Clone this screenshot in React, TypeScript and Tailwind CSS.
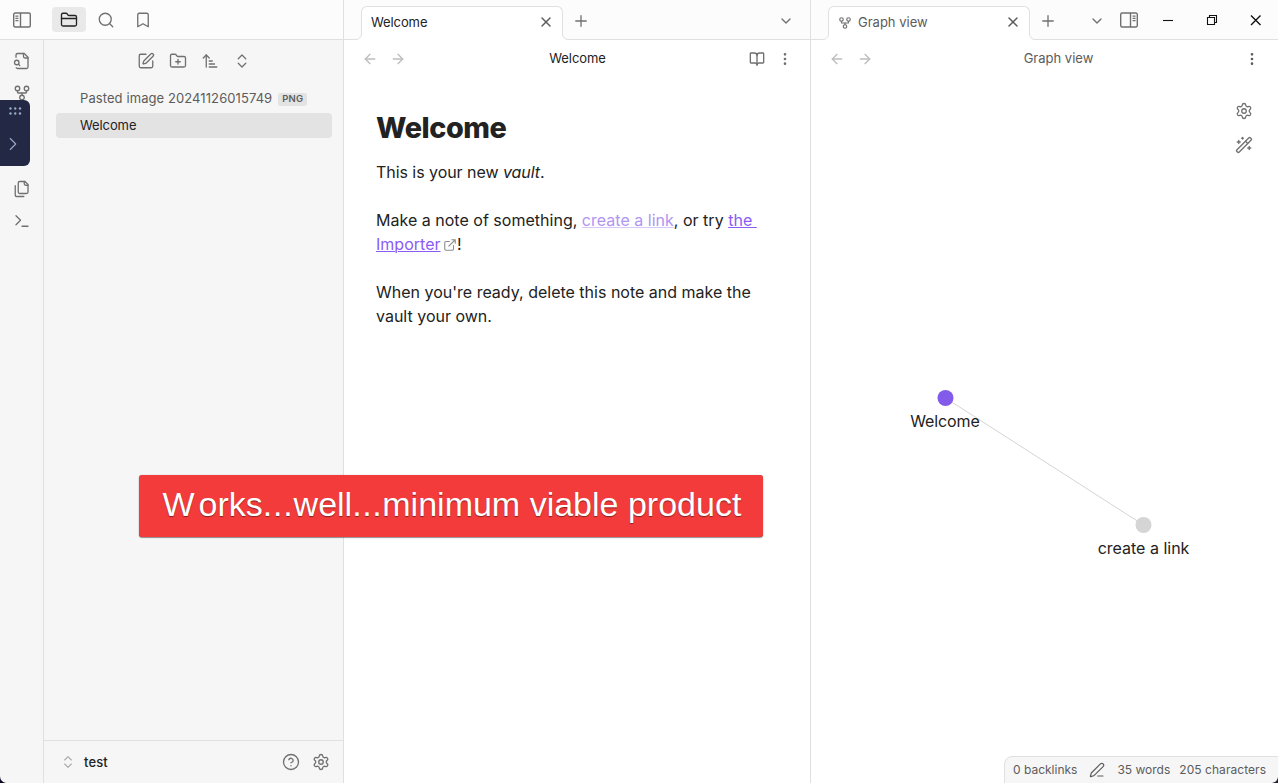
import type { ReactNode } from "react";
import {
  ArrowLeft,
  ArrowRight,
  ArrowUpNarrowWide,
  Bookmark,
  BookOpen,
  ChevronDown,
  ChevronRight,
  ChevronsUpDown,
  CircleHelp,
  EllipsisVertical,
  FolderClosed,
  FolderPlus,
  GitFork,
  PenLine,
  Plus,
  Search,
  Settings,
  SquarePen,
  WandSparkles,
  X,
} from "lucide-react";

function Glyph({ size = 18, stroke = 1.75, className = "", children }: { size?: number; stroke?: number; className?: string; children: ReactNode }) {
  return (
    <svg width={size} height={size} viewBox="0 0 24 24" fill="none" stroke="currentColor" strokeWidth={stroke} strokeLinecap="round" strokeLinejoin="round" className={className}>
      {children}
    </svg>
  );
}

function SidebarIcon({ flip = false }: { flip?: boolean }) {
  return (
    <svg width="18" height="16" viewBox="0 0 18 16" fill="none" stroke="currentColor" strokeWidth="1.4" className={flip ? "-scale-x-100" : ""}>
      <rect x="0.7" y="1" width="16.6" height="14" rx="1.5" />
      <path d="M7.500 1v14" />
      <path d="M2.400 4.100h3M2.400 6.400h3M2.400 8.700h3" strokeWidth="1.200" />
    </svg>
  );
}

function Tab({ title, icon, muted = false }: { title: string; icon?: ReactNode; muted?: boolean }) {
  return (
    <div className="relative mt-[6px] flex h-[34px] w-[202px] shrink-0 items-center rounded-t-[6px] border border-b-0 border-[#e0e0e0] bg-white pr-[9px] pb-[2px] pl-[9px] text-[13px]">
      <svg className="absolute -left-[6px] bottom-0" width="6" height="6" fill="none">
        <path d="M0 6V5.5A5.5 5.5 0 0 0 5.5 0H6V6z" fill="#fff" />
        <path d="M0 5.5A5.5 5.5 0 0 0 5.5 0" stroke="#e0e0e0" />
      </svg>
      <svg className="absolute -right-[6px] bottom-0" width="6" height="6" fill="none">
        <path d="M6 6V5.5A5.5 5.5 0 0 1 .5 0H0V6z" fill="#fff" />
        <path d="M6 5.5A5.5 5.5 0 0 1 .5 0" stroke="#e0e0e0" />
      </svg>
      {icon}
      <span className={muted ? "flex-1 text-[#5c5c5c]" : "flex-1 tracking-[-0.1px] text-[#222]"}>{title}</span>
      <X size={16} strokeWidth={2.2} className="-mr-[1px] mb-[1px] text-[#5c5c5c]" />
    </div>
  );
}

function NavArrows() {
  return (
    <div className="flex gap-3 text-[#bdbdbd]">
      <ArrowLeft size={16} strokeWidth={2} />
      <ArrowRight size={16} strokeWidth={2} />
    </div>
  );
}

const bar = "flex h-10 shrink-0 bg-[#fcfcfc] shadow-[inset_0_-1px_0_#e0e0e0]";

export default function App() {
  return (
    <div className="relative flex h-[783px] w-[1278px] overflow-hidden bg-white font-['Inter',sans-serif] text-[#222]">
      <aside className="flex w-[344px] shrink-0 flex-col border-r border-[#e0e0e0] bg-[#f6f6f6] text-[#707070]">
        <div className={bar + " items-center pl-[13px]"}>
          <SidebarIcon />
          <div className="mb-[1px] ml-[21px] flex h-[25px] w-[34px] items-center justify-center rounded-[4px] bg-[#e9e9e9] text-[#222]">
            <FolderClosed size={18} strokeWidth={1.75} />
          </div>
          <Search size={18} strokeWidth={1.75} className="ml-[11px]" />
          <Bookmark size={18} strokeWidth={1.75} className="ml-[19px]" />
        </div>
        <div className="flex min-h-0 flex-1">
          <nav className="flex w-11 shrink-0 flex-col items-center gap-[14px] border-r border-[#e0e0e0] pt-3">
            <Glyph>
              <path d="M14 2v4a2 2 0 0 0 2 2h4" />
              <path d="M4.268 21a2 2 0 0 0 1.727 1H18a2 2 0 0 0 2-2V7l-5-5H6a2 2 0 0 0-2 2v3" />
              <path d="m9 18-1.5-1.5" />
              <circle cx="5" cy="14" r="3" />
            </Glyph>
            <GitFork size={18} strokeWidth={1.75} />
            <div className="h-[50px]" />
            <Glyph>
              <path d="M20 7h-3a2 2 0 0 1-2-2V2" />
              <path d="M9 18a2 2 0 0 1-2-2V4a2 2 0 0 1 2-2h7l4 4v10a2 2 0 0 1-2 2Z" />
              <path d="M3 7.6v12.8A1.6 1.6 0 0 0 4.6 22h9.8" />
            </Glyph>
            <Glyph>
              <path d="m4 17 6-6-6-6" />
              <path d="M12 19h8" />
            </Glyph>
          </nav>
          <div className="flex flex-1 flex-col">
            <div className="flex gap-[14px] pt-3 pl-[93px]">
              <SquarePen size={18} strokeWidth={1.75} />
              <FolderPlus size={18} strokeWidth={1.75} />
              <ArrowUpNarrowWide size={18} strokeWidth={1.75} />
              <ChevronsUpDown size={18} strokeWidth={1.75} />
            </div>
            <div className="mt-4 flex flex-1 flex-col gap-[2px] px-3 text-[13px]">
              <div className="flex h-[25px] items-center pt-[1px] pl-6 text-[#5c5c5c]">
                <span className="tracking-[0.09px]">Pasted image 20241126015749</span>
                <span className="ml-[6px] flex h-[13px] items-center rounded-[3px] bg-[#e3e3e3] px-1 text-[9.500px] font-semibold tracking-[0.02em]">PNG</span>
              </div>
              <div className="mr-[-1px] flex h-[25px] items-center rounded-[4px] bg-[#e3e3e3] pl-6 tracking-[-0.1px] text-[#222]">Welcome</div>
            </div>
            <div className="flex h-[43px] items-center border-t border-[#e0e0e0] pr-[13px] pl-4">
              <ChevronsUpDown size={16} strokeWidth={1.75} className="text-[#ababab]" />
              <span className="ml-2 flex-1 pt-[2px] text-[13px] font-[450] tracking-[0.1px] text-[#222]">test</span>
              <CircleHelp size={18} strokeWidth={1.75} />
              <Settings size={18} strokeWidth={1.75} className="ml-3" />
            </div>
          </div>
        </div>
      </aside>

      <main className="flex w-[467px] shrink-0 flex-col border-r border-[#e0e0e0]">
        <div className={bar + " pl-[17px]"}>
          <Tab title="Welcome" />
          <div className="flex flex-1 items-center justify-between pt-[2px] pr-4 pl-[9px] text-[#707070]">
            <Plus size={18} strokeWidth={1.75} />
            <ChevronDown size={16} strokeWidth={2} />
          </div>
        </div>
        <div className="flex h-[38px] items-center px-[18px]">
          <NavArrows />
          <span className="flex-1 text-center text-[13px] tracking-[-0.1px]">Welcome</span>
          <div className="flex gap-[11px] text-[#707070]">
            <BookOpen size={16} strokeWidth={2} className="mr-[1px]" />
            <EllipsisVertical size={16} strokeWidth={2} className="mr-[-1px]" />
          </div>
        </div>
        <article className="px-8 pt-8 text-[16px] leading-6">
          <h1 className="text-[28.8px] leading-[35px] font-extrabold tracking-[-0.015em]">Welcome</h1>
          <p className="mt-[15px] tracking-[-0.05px]">
            This is your new <em>vault</em>.
          </p>
          <p className="mt-6 tracking-[0.015px] whitespace-nowrap">
            Make a note of something, <a className="text-[#b095f3] underline decoration-[#d8caf8] decoration-1">create a link</a>, or try{" "}
            <a className="text-[#8a5cf5] underline decoration-1">
              the&nbsp;
              <br />
              Importer
            </a>
            <Glyph size={14} stroke={1.9} className="mb-[2px] ml-[2.500px] inline-block align-middle text-[#8c8c8c]">
              <path d="M18 13v6a2 2 0 0 1-2 2H5a2 2 0 0 1-2-2V8a2 2 0 0 1 2-2h6M15 3h6v6M10 14 21 3" />
            </Glyph>
            !
          </p>
          <p className="mt-6">
            When you're ready, delete this note and make the
            <br />
            vault your own.
          </p>
        </article>
      </main>

      <section className="flex flex-1 flex-col">
        <div className={bar + " pl-[17px]"}>
          <Tab title="Graph view" muted icon={<GitFork size={14} strokeWidth={2} className="mr-[6px] text-[#707070]" />} />
          <div className="flex flex-1 items-center pl-[9px] text-[#707070]">
            <Plus size={18} strokeWidth={1.75} className="mt-[2px]" />
            <ChevronDown size={16} strokeWidth={2} className="mt-[2px] ml-8" />
            <span className="ml-[15px]">
              <SidebarIcon flip />
            </span>
            <svg width="98" height="12" viewBox="0 0 98 12" fill="none" stroke="#111" strokeWidth="1.1" className="ml-[25px]">
              <path d="M0 6.5h10" />
              <path d="M44.5 3.5h7v7h-7zM46.5 3.5v-2h7v7h-2" />
              <path d="m88 1.5 9.5 9.5M97.500 1.500 88 11" strokeWidth="1.4" />
            </svg>
          </div>
        </div>
        <div className="flex h-[38px] items-center px-[18px] text-[#5c5c5c]">
          <NavArrows />
          <span className="flex-1 text-center text-[13px]">Graph view</span>
          <EllipsisVertical size={16} strokeWidth={2} />
        </div>
        <div className="relative flex-1 text-[16px]">
          <svg className="absolute inset-0" width="467" height="705">
            <path d="M134.500 320 332.500 447" stroke="#d4d4d4" />
            <circle cx="134.500" cy="320" r="8" fill="#835bea" />
            <circle cx="332.500" cy="447" r="8" fill="#d5d5d5" />
          </svg>
          <span className="absolute top-[331px] left-[134px] -translate-x-1/2 leading-6 tracking-[-0.1px]">Welcome</span>
          <span className="absolute top-[458px] left-[332.500px] -translate-x-1/2 leading-6 whitespace-nowrap">create a link</span>
          <div className="absolute top-6 right-[25px] flex flex-col gap-4 text-[#707070]">
            <Settings size={18} strokeWidth={1.75} />
            <WandSparkles size={18} strokeWidth={1.75} />
          </div>
          <footer className="absolute right-[-1px] bottom-[-1px] flex h-[28px] w-[275px] items-center rounded-tl-[8px] border border-[#e0e0e0] bg-[#f6f6f6] pl-2 text-[12px] whitespace-nowrap text-[#5c5c5c]">
            <span>0 backlinks</span>
            <PenLine size={16} strokeWidth={1.75} className="ml-3" />
            <span className="ml-3">35 words</span>
            <span className="ml-[9px] tracking-[0.05px]">205 characters</span>
          </footer>
        </div>
      </section>

      <div className="absolute top-[100px] left-0 h-[66px] w-[30px] rounded-r-[6px] bg-[#232844] text-[#98a9c8]">
        <svg className="absolute top-[7px] left-[9px]" width="13" height="9" fill="currentColor">
          <circle cx="1.500" cy="1.500" r="1.200" />
          <circle cx="6.200" cy="1.500" r="1.200" />
          <circle cx="11" cy="1.500" r="1.200" />
          <circle cx="1.500" cy="6.500" r="1.200" />
          <circle cx="6.200" cy="6.500" r="1.200" />
          <circle cx="11" cy="6.500" r="1.200" />
        </svg>
        <ChevronRight size={22} strokeWidth={1.200} className="absolute top-[33px] left-[2px]" />
      </div>

      <div className="absolute top-[475px] left-[139px] flex h-[62px] w-[624px] items-center rounded-[3px] bg-[#f33b3b] pb-[4px] pl-[23.500px] font-['Liberation_Sans',sans-serif] text-[34px] whitespace-nowrap text-white shadow-[0_1px_1px_rgba(0,0,0,0.4),0_0_1px_rgba(0,0,0,0.4)] [font-kerning:none] [text-shadow:0_1px_1px_rgba(0,0,0,0.45)]">
        <p>
          <span className="tracking-[4px]">W</span>orks<span className="tracking-[0.8px]">...</span>well<span className="tracking-[0.6px]">...</span>minimum viable product
        </p>
      </div>

      <svg className="absolute bottom-0 left-0" width="6" height="7">
        <path d="M0 0A7 7 0 0 0 6 7H0z" fill="#0b0b28" />
      </svg>
      <svg className="absolute right-0 bottom-0" width="6" height="6">
        <path d="M6 0A7 7 0 0 1 0 6H6z" fill="#1c2030" />
      </svg>
    </div>
  );
}
